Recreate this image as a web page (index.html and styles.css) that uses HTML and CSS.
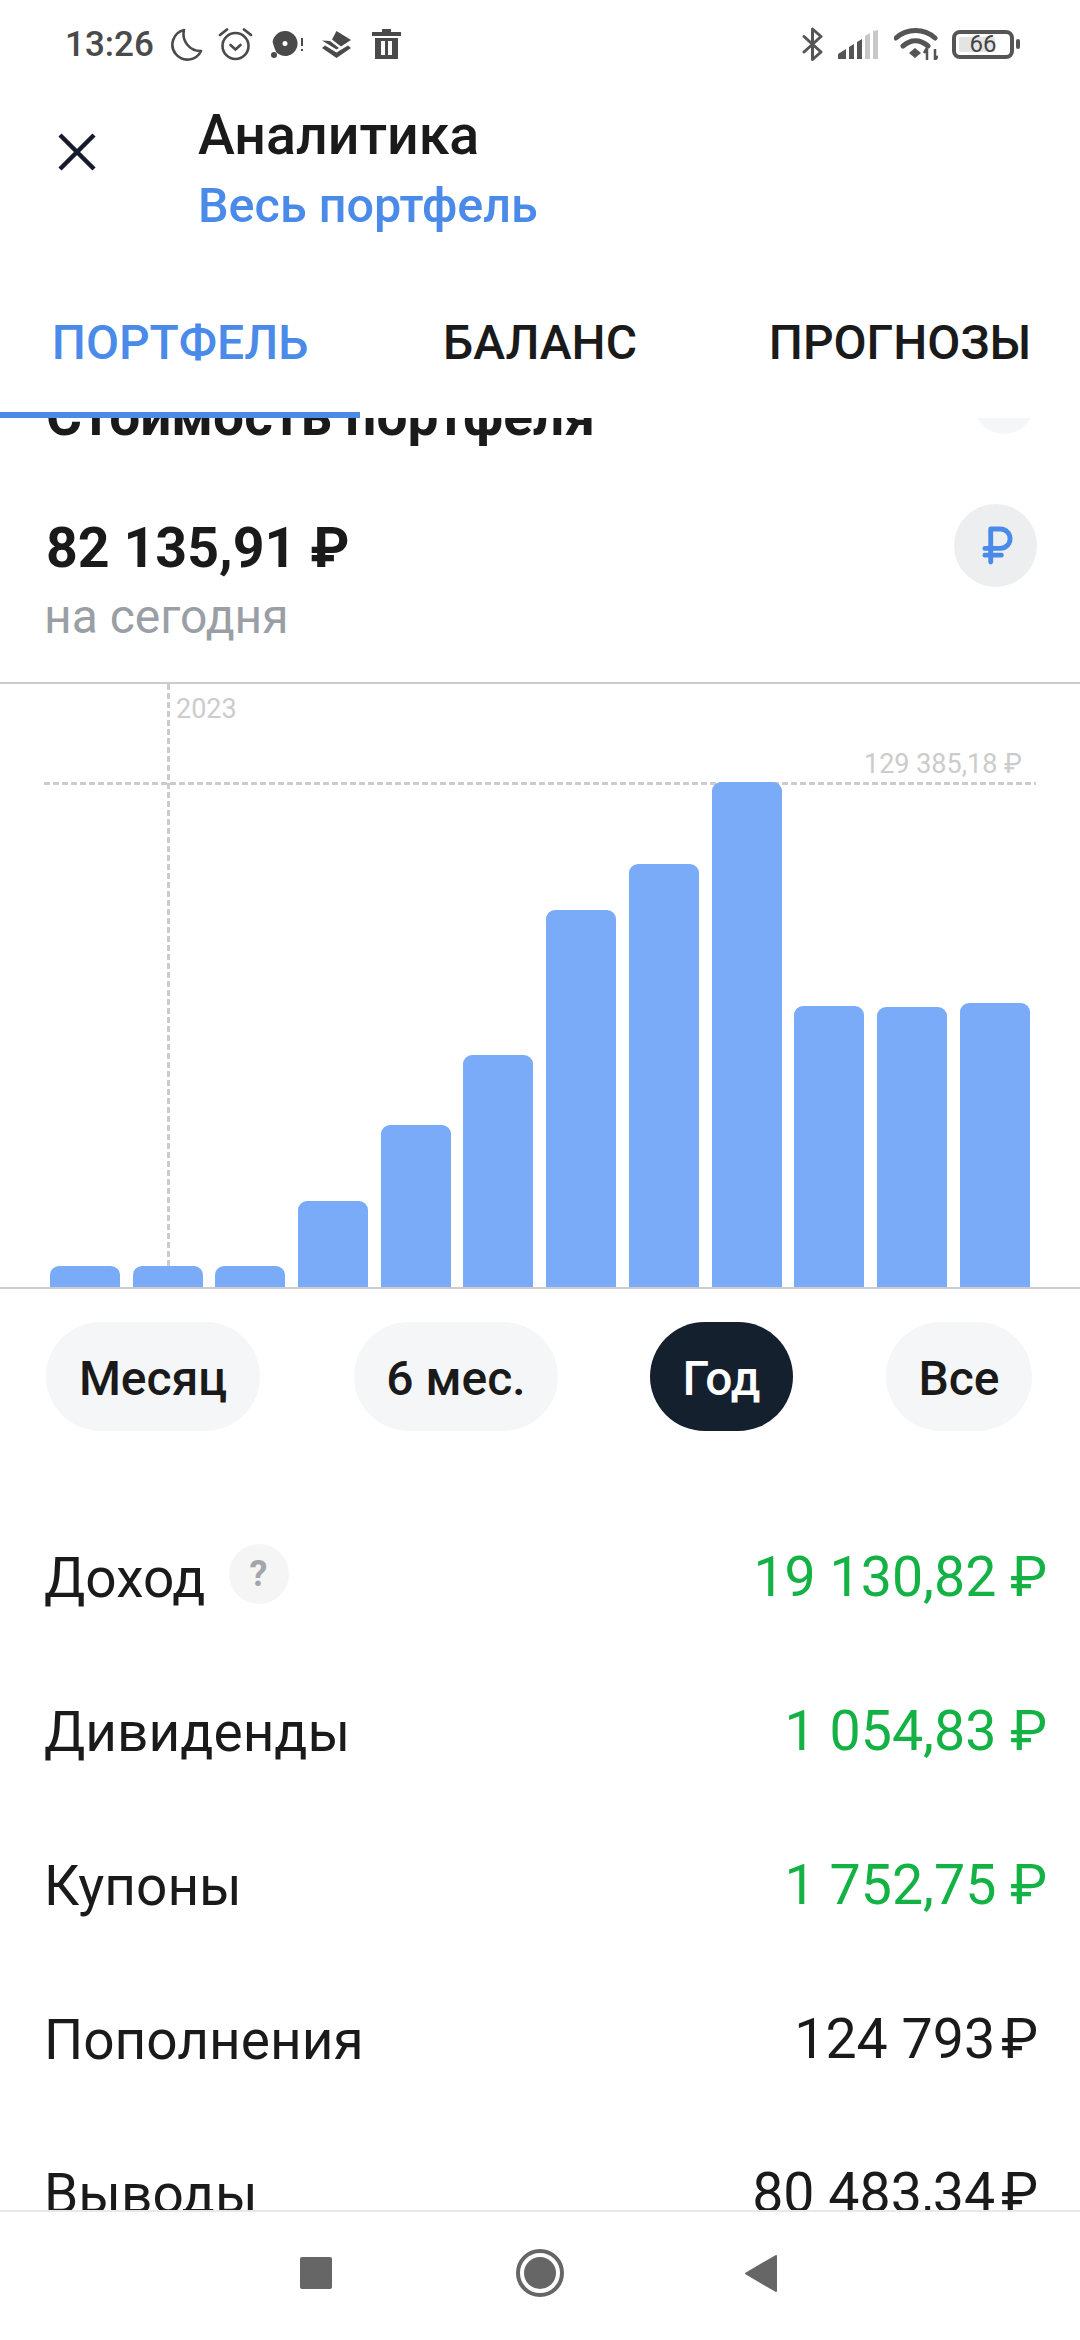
FILE: index.html
```html
<!DOCTYPE html>
<html lang="ru">
<head>
<meta charset="utf-8">
<title>Аналитика</title>
<link rel="stylesheet" href="styles.css">
</head>
<body>
<div class="screen">
  <div class="status">
    <div class="status-left">
      <span class="time">13:26</span>
      <svg class="si si-moon" viewBox="0 0 32 34"><path d="M13 3A15 15 0 1 0 30 24A17 17 0 0 1 13 3Z" fill="none" stroke="#4a4a4a" stroke-width="2.6" stroke-linejoin="round"/></svg>
      <svg class="si si-alarm" viewBox="0 0 35 34"><circle cx="17.5" cy="19" r="13" fill="none" stroke="#4a4a4a" stroke-width="2.6"/><path d="M2 8L9 2.5M33 8L26 2.5" fill="none" stroke="#4a4a4a" stroke-width="2.8" stroke-linecap="round"/><path d="M12.5 18L17.5 22.5L22.5 18" fill="none" stroke="#4a4a4a" stroke-width="2.6" stroke-linecap="round"/></svg>
      <svg class="si si-disc" viewBox="0 0 32 27"><path fill-rule="evenodd" d="M14 0A12.5 12.5 0 1 1 5.5 21.6C4 19 2.4 14 1.6 11A12.5 12.5 0 0 1 14 0ZM14 10A2.500 2.500 0 1 0 14 15A2.500 2.500 0 0 0 14 10Z" fill="#4a4a4a"/><circle cx="3" cy="24" r="3" fill="#4a4a4a"/><path d="M31 7V15M31 18V20" stroke="#4a4a4a" stroke-width="2"/></svg>
      <svg class="si si-layers" viewBox="0 0 29 27"><path d="M14.500 0L29 9L19 15.500L10 8.500ZM8 10L17 17L14.500 18.500L0 9.500Z" fill="#4a4a4a"/><path d="M3 14.500L14.500 21.500L26 14.500L29 17L14.500 27L0 17Z" fill="#4a4a4a"/></svg>
      <svg class="si si-trash" viewBox="0 0 29 30"><path fill-rule="evenodd" d="M10 0H19V3H29V7H0V3H10ZM3 9H26V30H3ZM9 12V26H13V12ZM16 12V26H20V12Z" fill="#4a4a4a"/></svg>
    </div>
    <div class="status-right">
      <svg class="si si-bt" viewBox="0 0 22 34"><path d="M2 9.500L19 25L10.500 32.500V2L19 9.500L2 25" fill="none" stroke="#555" stroke-width="3" stroke-linecap="round" stroke-linejoin="round"/></svg>
      <svg class="si si-signal" viewBox="0 0 40 29"><path d="M0 29V24L8 19V29ZM11 29V17L16 14V29ZM19 29V12L24 9V29Z" fill="#555"/><path d="M27 29V6L32 3V29ZM35 29V1L40 0V29Z" fill="#c8c8c8"/></svg>
      <svg class="si si-wifi" viewBox="0 0 44 32"><path d="M2 10C13 0 30 0 41 10M9 18C17 11 26 11 34 18" fill="none" stroke="#555" stroke-width="5" stroke-linecap="round"/><path d="M15 25L21 20L27 25L21 30Z" fill="#555"/><path d="M33 21V32M30 25L33 20M41 21V32M44 28L41 32" stroke="#555" stroke-width="2.500" fill="none"/></svg>
      <div class="battery"><span class="battery-level"></span><span class="battery-num">66</span></div>
      <span class="battery-nub"></span>
    </div>
  </div>

  <header class="header">
    <svg class="close" viewBox="0 0 40 40"><path d="M3 3L37 37M37 3L3 37" stroke="#151b2d" stroke-width="4.500" fill="none"/></svg>
    <div class="header-text">
      <div class="title">Аналитика</div>
      <div class="subtitle">Весь портфель</div>
    </div>
  </header>

  <nav class="tabs">
    <div class="tab tab-active">ПОРТФЕЛЬ</div>
    <div class="tab">БАЛАНС</div>
    <div class="tab">ПРОГНОЗЫ</div>
  </nav>

  <main class="main">
    <div class="section-head">
      <div class="section-title">Стоимость портфеля</div>
      <span class="ghost-btn"></span>
    </div>
    <div class="summary">
      <div>
        <div class="amount">82 135,91 ₽</div>
        <div class="amount-note">на сегодня</div>
      </div>
      <div class="currency">
        <svg class="currency-icon" viewBox="0 0 32 40"><path d="M9 37V3H19A10 10 0 0 1 19 23H3M3 30H20" fill="none" stroke="#4a8ae8" stroke-width="5" stroke-linecap="round" stroke-linejoin="round"/></svg>
      </div>
    </div>

    <section class="chart">
      <span class="v-line"></span>
      <span class="h-line"></span>
      <span class="year">2023</span>
      <span class="max">129 385,18 ₽</span>
      <div class="bars">
        <i class="bar" style="height:21px"></i>
        <i class="bar" style="height:21px"></i>
        <i class="bar" style="height:21px"></i>
        <i class="bar" style="height:86px"></i>
        <i class="bar" style="height:162px"></i>
        <i class="bar" style="height:232px"></i>
        <i class="bar" style="height:377px"></i>
        <i class="bar" style="height:423px"></i>
        <i class="bar" style="height:505px"></i>
        <i class="bar" style="height:281px"></i>
        <i class="bar" style="height:280px"></i>
        <i class="bar" style="height:284px"></i>
      </div>
    </section>

    <div class="periods">
      <div class="pill pill-month">Месяц</div>
      <div class="pill pill-six">6 мес.</div>
      <div class="pill pill-year pill-active">Год</div>
      <div class="pill pill-all">Все</div>
    </div>

    <div class="rows">
      <div class="row"><div class="label">Доход<span class="help">?</span></div><div class="value green">19 130,82 ₽</div></div>
      <div class="row"><div class="label">Дивиденды</div><div class="value green">1 054,83 ₽</div></div>
      <div class="row"><div class="label">Купоны</div><div class="value green">1 752,75 ₽</div></div>
      <div class="row"><div class="label">Пополнения</div><div class="value">124 793<span class="thin-gap"></span>₽</div></div>
      <div class="row"><div class="label">Выводы</div><div class="value">80 483,34<span class="thin-gap"></span>₽</div></div>
    </div>
  </main>

  <footer class="navbar">
    <span class="nav-square"></span>
    <span class="nav-home"><span class="nav-home-dot"></span></span>
    <svg class="nav-back" viewBox="0 0 32 37"><path d="M31 1V36L1 18.500Z" fill="#666" stroke="#666" stroke-width="2" stroke-linejoin="round"/></svg>
  </footer>
</div>
</body>
</html>
```
FILE: styles.css
```css
* { box-sizing: border-box; }
html, body { margin: 0; padding: 0; background: #fff; }
body { font-family: Roboto, "Noto Sans", sans-serif; color: #1a1a1a; }
.screen { width: 1080px; height: 2340px; display: flex; flex-direction: column; overflow: hidden; background: #fff; }

.status { height: 88px; flex: none; display: flex; justify-content: space-between; align-items: center; padding: 0 60px 0 65px; }
.status-left, .status-right { display: flex; align-items: center; }
.time { font-size: 35px; font-weight: 500; color: #4a4a4a; width: 106px; }
.si { display: block; flex: none; }
.si-moon { width: 32px; height: 34px; margin-right: 15px; }
.si-alarm { width: 35px; height: 34px; margin-right: 18px; }
.si-disc { width: 32px; height: 27px; margin-right: 19px; }
.si-layers { width: 29px; height: 27px; margin-right: 21px; }
.si-trash { width: 29px; height: 30px; }
.si-bt { width: 22px; height: 34px; margin-right: 14px; }
.si-signal { width: 40px; height: 29px; margin-right: 16px; }
.si-wifi { width: 44px; height: 32px; margin-right: 14px; }
.battery { width: 62px; height: 29px; border: 4px solid #555; border-radius: 8px; display: flex; align-items: center; justify-content: center; overflow: hidden; position: relative; }
.battery-level { position: absolute; left: 3px; top: 3px; bottom: 3px; width: 36px; background: #e4e4e4; border-radius: 2px; }
.battery-num { position: relative; font-size: 24px; line-height: 21px; color: #444; }
.battery-nub { width: 4px; height: 10px; background: #555; border-radius: 2px; margin-left: 2px; }

.header { height: 152px; flex: none; display: flex; align-items: flex-start; padding-left: 57px; }
.close { width: 40px; height: 40px; margin-top: 44px; flex: none; }
.header-text { margin-left: 101px; }
.title { font-size: 55.500px; font-weight: 500; line-height: 60px; color: #1a1a1a; margin-top: 18px; }
.subtitle { font-size: 48.500px; font-weight: 500; line-height: 56px; color: #4a8ae8; margin-top: 12px; }

.tabs { height: 178px; flex: none; display: flex; }
.tab { flex: 1; height: 178px; padding-top: 73px; text-align: center; font-size: 48px; font-weight: 500; line-height: 60px; color: #1a1a1a; border-bottom: 6px solid transparent; }
.tab-active { color: #4a8ae8; border-bottom-color: #4a8ae8; }

.main { flex: 1; min-height: 0; overflow: hidden; display: flex; flex-direction: column; }
.section-head { height: 50px; margin-top: -25px; flex: none; display: flex; justify-content: space-between; align-items: flex-end; padding: 0 46px 0 46px; }
.section-title { font-size: 55px; font-weight: 700; line-height: 54px; color: #1a1a1a; }
.ghost-btn { width: 60px; height: 60px; border-radius: 50%; background: #f5f6f7; margin-bottom: 9px; }

.summary { height: 239px; flex: none; display: flex; justify-content: space-between; padding: 75px 43px 0 46px; }
.amount { font-size: 55.500px; font-weight: 700; line-height: 62px; color: #1a1a1a; }
.amount-note { font-size: 48px; line-height: 54px; color: #9a9ea5; margin-top: 10px; margin-left: -2px; }
.currency { width: 83px; height: 83px; border-radius: 50%; background: #eceef0; display: flex; align-items: center; justify-content: center; margin-top: -14px; padding-left: 4px; }
.currency-icon { width: 31px; height: 39px; }

.chart { position: relative; height: 607px; flex: none; border-top: 2px solid #ccc; border-bottom: 2px solid #ccc; display: flex; align-items: flex-end; }
.v-line { position: absolute; left: 167px; top: 0; bottom: 0; width: 3px; background: repeating-linear-gradient(to bottom, #ccc 0 6px, transparent 6px 9px); }
.h-line { position: absolute; left: 44px; top: 98px; width: 992px; height: 3px; background: repeating-linear-gradient(to right, #ccc 0 6px, transparent 6px 9px); }
.year { position: absolute; left: 176px; top: 8px; font-size: 27px; line-height: 34px; color: #ccc; }
.max { position: absolute; right: 58px; top: 63px; font-size: 27px; line-height: 34px; color: #ccc; }
.bars { position: relative; z-index: 1; display: flex; align-items: flex-end; gap: 12.700px; padding-left: 50px; }
.bar { display: block; width: 70px; background: #7aabf9; border-radius: 9px 9px 0 0; }

.periods { flex: none; display: flex; margin-top: 33px; padding-left: 46px; }
.pill { height: 109px; border-radius: 55px; background: #f5f6f8; display: flex; align-items: center; justify-content: center; padding-top: 4px; font-size: 48px; font-weight: 500; color: #1a1a1a; }
.pill-month { width: 214px; }
.pill-six { width: 204px; margin-left: 94px; }
.pill-year { width: 143px; margin-left: 92px; }
.pill-all { width: 146px; margin-left: 93px; }
.pill-active { background: #15202f; color: #fff; }

.rows { flex: none; margin-top: 70px; }
.row { height: 154px; display: flex; justify-content: space-between; align-items: center; padding: 0 33px 0 44px; font-size: 55.500px; }
.label { display: flex; align-items: center; font-size: 55px; line-height: 60px; color: #1a1a1a; }
.help { width: 60px; height: 60px; border-radius: 50%; background: #f5f5f6; color: #a3a5ab; font-size: 36px; font-weight: 700; display: flex; align-items: center; justify-content: center; margin: -9px 0 0 23px; }
.value { line-height: 60px; color: #1a1a1a; display: flex; align-items: center; padding-right: 9px; }
.value.green { color: #14b145; padding-right: 0; }
.thin-gap { width: 6px; }

.navbar { height: 130px; flex: none; border-top: 2px solid #e8e8e8; background: #fff; display: flex; align-items: center; justify-content: flex-start; padding: 0 0 6px 300px; }
.nav-square { width: 32px; height: 32px; background: #666; border-radius: 2px; }
.nav-home { width: 48px; height: 48px; border: 4px solid #666; border-radius: 50%; margin-left: 184px; display: flex; align-items: center; justify-content: center; }
.nav-home-dot { width: 32px; height: 32px; border-radius: 50%; background: #666; }
.nav-back { width: 32px; height: 37px; margin-left: 181px; }
```
